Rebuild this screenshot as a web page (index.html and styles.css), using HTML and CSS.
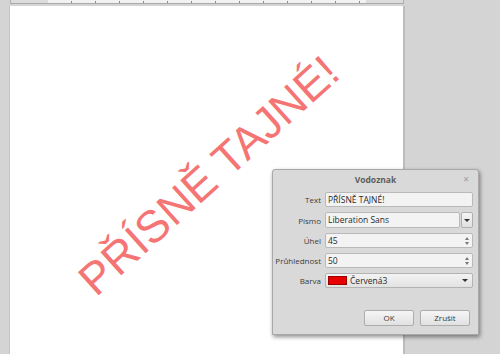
FILE: index.html
```html
<html>
<head>
    <title>Vodoznak</title>
    <link rel="stylesheet" href="styles.css">
</head>
<body>
<div class="workspace">
    <div class="ruler">
        <div class="rulerMargin"></div>
        <div class="rulerBody"></div>
        <div class="rulerMargin"></div>
    </div>
    <div class="page">
        <span class="watermark">PŘÍSNĚ TAJNÉ!</span>
    </div>
</div>

<div class="dialog">
    <div class="titleBar">
        <span class="title">Vodoznak</span>
        <span class="close">×</span>
    </div>

    <div class="form">
        <label>Text</label>
        <div class="field">PŘÍSNĚ TAJNÉ!</div>

        <label>Písmo</label>
        <div class="combo">
            <div class="field">Liberation Sans</div>
            <div class="comboBtn"><span class="arrow"></span></div>
        </div>

        <label>Úhel</label>
        <div class="field spin">45<span class="spinBtns"><i class="up"></i><i class="down"></i></span></div>

        <label>Průhlednost</label>
        <div class="field spin">50<span class="spinBtns"><i class="up"></i><i class="down"></i></span></div>

        <label>Barva</label>
        <div class="colorBtn">
            <span class="swatch"></span>
            <span class="colorName">Červená3</span>
            <span class="arrow"></span>
        </div>
    </div>

    <div class="buttons">
        <div class="btn">OK</div>
        <div class="btn">Zrušit</div>
    </div>
</div>
</body>
</html>
```

FILE: styles.css
```css
body{
    margin: 0;
    background-color: #d4d4d4;
    font-family: "Open Sans", "DejaVu Sans", sans-serif;
    overflow: hidden;
}

.workspace{
    display: flex;
    flex-direction: column;
    height: 354px;
}

/* Ruler */
.ruler{
    display: flex;
    width: 392px;
    height: 3px;
    margin-left: 10px;
    border-bottom: 1px solid #a9a9a9;
    border-left: 1px solid #b0b0b0;
    border-right: 1px solid #b0b0b0;
}
.rulerMargin{
    width: 37px;
    background-color: #dcdcdc;
}
.rulerBody{
    flex: 1;
    background-color: #f2f2f2;
    background-image: repeating-linear-gradient(to right, transparent 0, transparent 23px, #8a8a8a 23px, #8a8a8a 24px);
    background-size: 100% 2px;
    background-position: 0 1px;
    background-repeat: no-repeat;
}

/* Page */
.page{
    position: relative;
    flex: 1;
    width: 393px;
    margin-top: 2px;
    margin-left: 9px;
    background-color: white;
    border-right: 2px solid #bcbcbc;
    border-left: 1px solid #c4c4c4;
    overflow: hidden;
}
.watermark{
    position: absolute;
    left: 199px;
    top: 170px;
    transform: translate(-50%, -50%) rotate(-42deg);
    font: 45px "Liberation Sans", Arial, sans-serif;
    color: #f57474;
    white-space: nowrap;
}

/* Dialog window */
.dialog{
    position: absolute;
    left: 272px;
    top: 169px;
    width: 205px;
    height: 164px;
    background-color: #d9d9d9;
    border: 1px solid #a8a8a8;
    border-radius: 3px 3px 0 0;
    box-shadow: 1px 2px 4px rgba(0,0,0,0.45);
    display: flex;
    flex-direction: column;
    font-size: 8px;
    color: #3a3a3a;
}
.titleBar{
    position: relative;
    display: flex;
    justify-content: center;
    align-items: center;
    height: 18px;
}
.title{
    font-weight: bold;
    color: #5e5e5e;
    font-size: 8.5px;
}
.close{
    position: absolute;
    right: 9px;
    top: 2px;
    color: #9a9a9a;
    font-size: 10px;
}

.form{
    display: grid;
    grid-template-columns: 48px 148px;
    column-gap: 4px;
    row-gap: 5px;
    padding: 4px 6px 0 0;
    align-items: center;
}
.form label{
    text-align: right;
    color: #3c3c3c;
}
.field{
    height: 13px;
    line-height: 13px;
    padding-left: 2px;
    background-color: #f3f3f3;
    border: 1px solid #b9b9b9;
    border-radius: 2px;
    color: #2a2a2a;
    font-size: 8.5px;
    white-space: nowrap;
}
.combo{
    display: flex;
    height: 16px;
}
.combo .field{
    flex: 1;
    height: 14px;
    line-height: 14px;
}
.comboBtn{
    width: 10px;
    margin-left: 1px;
    border: 1px solid #b0b0b0;
    border-radius: 2px;
    background: linear-gradient(#f4f4f4, #e0e0e0);
    display: flex;
    align-items: center;
    justify-content: center;
}
.arrow{
    width: 0;
    height: 0;
    border-left: 3px solid transparent;
    border-right: 3px solid transparent;
    border-top: 3px solid #333;
}
.spin{
    display: flex;
    justify-content: space-between;
    align-items: center;
}
.spinBtns{
    display: flex;
    flex-direction: column;
    gap: 2px;
    padding-right: 3px;
}
.spinBtns i{
    width: 0;
    height: 0;
    border-left: 2px solid transparent;
    border-right: 2px solid transparent;
}
.spinBtns .up{
    border-bottom: 3px solid #777;
}
.spinBtns .down{
    border-top: 3px solid #777;
}

.colorBtn{
    display: flex;
    align-items: center;
    height: 13px;
    padding: 0 4px 0 2px;
    border: 1px solid #b3b3b3;
    border-radius: 2px;
    background: linear-gradient(#f3f3f3, #e2e2e2);
    color: #2a2a2a;
    font-size: 8.5px;
}
.swatch{
    width: 17px;
    height: 7px;
    background-color: #e80000;
    border: 1px solid #9a0000;
    margin-right: 3px;
}
.colorName{
    flex: 1;
}

.buttons{
    display: flex;
    justify-content: flex-end;
    gap: 6px;
    margin-top: auto;
    padding: 0 8px 8px 0;
}
.btn{
    width: 48px;
    height: 14px;
    line-height: 14px;
    text-align: center;
    border: 1px solid #adadad;
    border-radius: 2px;
    background: linear-gradient(#f6f6f6, #e1e1e1);
    color: #3a3a3a;
}
```
